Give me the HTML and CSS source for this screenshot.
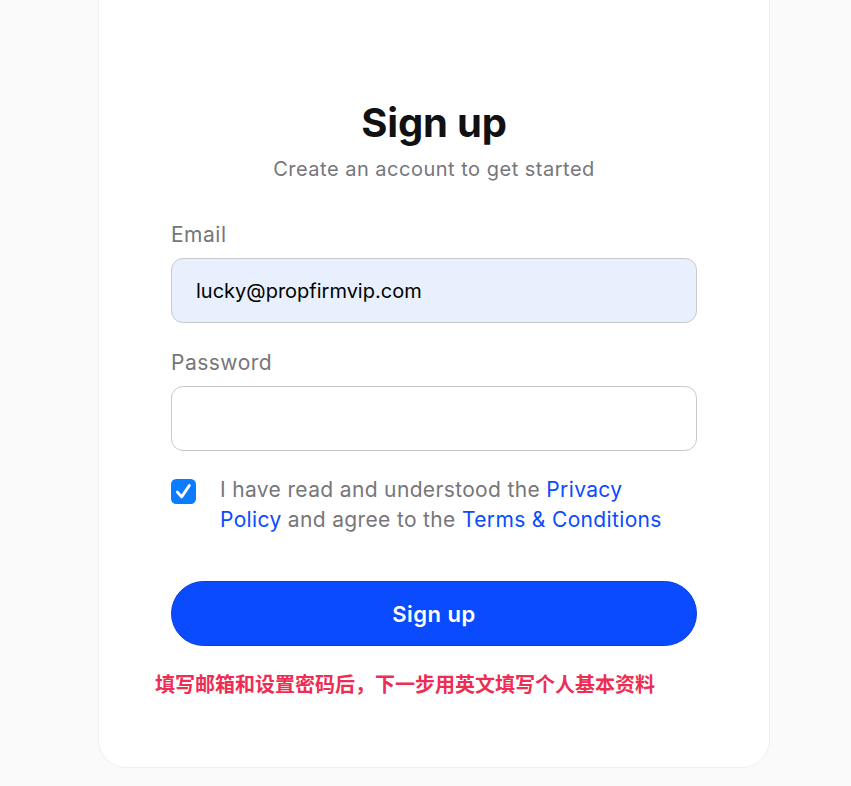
FILE: index.html
```html
<!DOCTYPE html>
<html lang="en">
<head>
<meta charset="utf-8">
<title>Sign up</title>
<link rel="stylesheet" href="styles.css">
</head>
<body>
<main class="card">
  <h1 class="title">Sign up</h1>
  <p class="subtitle">Create an account to get started</p>
  <form class="form">
    <label class="label" for="email">Email</label>
    <input class="field field-filled" id="email" type="email" value="lucky@propfirmvip.com">
    <label class="label label-pw" for="pw">Password</label>
    <input class="field" id="pw" type="password">
    <div class="agree">
      <span class="check" aria-hidden="true">
        <svg viewBox="0 0 24 24" width="25" height="25">
          <rect x="0" y="0" width="24" height="24" rx="5" fill="#0b7bff"/>
          <path d="M6.2 12.6 L10.2 17.2 L17.6 6.2" fill="none" stroke="#fff" stroke-width="2.8" stroke-linecap="round" stroke-linejoin="round"/>
        </svg>
      </span>
      <p class="agree-text">I have read and understood the <a class="link" href="#">Privacy Policy</a> and agree to the <a class="link" href="#">Terms &amp; Conditions</a></p>
    </div>
    <button class="btn" type="button">Sign up</button>
  </form>
  <p class="note">填写邮箱和设置密码后，下一步用英文填写个人基本资料</p>
</main>
</body>
</html>
```
FILE: styles.css
```css
* { box-sizing: border-box; }
html, body { margin: 0; padding: 0; }
body {
  background: #fafafa;
  font-family: Inter, "Noto Sans", "Noto Sans CJK SC", sans-serif;
  height: 786px;
  overflow: hidden;
}
.card {
  width: 672px;
  margin: -40px 0 0 98px;
  height: 808px;
  background: #fff;
  border: 1px solid #efefef;
  border-radius: 28px;
  padding: 138px 72px 0;
}
.title {
  margin: 0;
  text-align: center;
  font-size: 40px;
  line-height: 48px;
  font-weight: 700;
  color: #111114;
  letter-spacing: -0.2px;
}
.subtitle {
  margin: 8px 0 0;
  text-align: center;
  font-size: 20px;
  line-height: 28px;
  letter-spacing: 0.5px;
  color: #76767a;
}
.form {
  display: flex;
  flex-direction: column;
  margin-top: 38px;
}
.label {
  font-size: 21px;
  line-height: 28px;
  letter-spacing: 0.5px;
  color: #76767a;
  margin-bottom: 9px;
}
.label-pw { margin-top: 26px; }
.field {
  height: 65px;
  width: 100%;
  border: 1px solid #c8c8cc;
  border-radius: 12px;
  background: #fff;
  padding: 0 24px;
  font-family: Inter, "Noto Sans", sans-serif;
  font-size: 20px;
  color: #000;
  outline: none;
}
.field-filled { background: #e8f0fe; }
.agree {
  display: flex;
  align-items: flex-start;
  gap: 24px;
  margin-top: 24px;
}
.check {
  flex: none;
  width: 25px;
  height: 25px;
  margin-top: 4px;
  display: block;
}
.check svg { display: block; }
.agree-text {
  margin: 0;
  width: 448px;
  font-size: 21px;
  line-height: 30px;
  letter-spacing: 0.35px;
  color: #76767a;
}
.link { color: #0a4bff; text-decoration: none; }
.btn {
  margin-top: 46px;
  height: 65px;
  border: 1px solid #0841d9;
  border-radius: 33px;
  background: #0a4bff;
  color: #fff;
  font-family: Inter, "Noto Sans", sans-serif;
  font-size: 22px;
  font-weight: 600;
  letter-spacing: 0.5px;
  cursor: pointer;
}
.note {
  margin: 25px 0 0 -16px;
  font-family: "Noto Sans CJK SC", sans-serif;
  font-size: 20px;
  line-height: 26px;
  font-weight: 700;
  color: #ee2d52;
  white-space: nowrap;
}
```
